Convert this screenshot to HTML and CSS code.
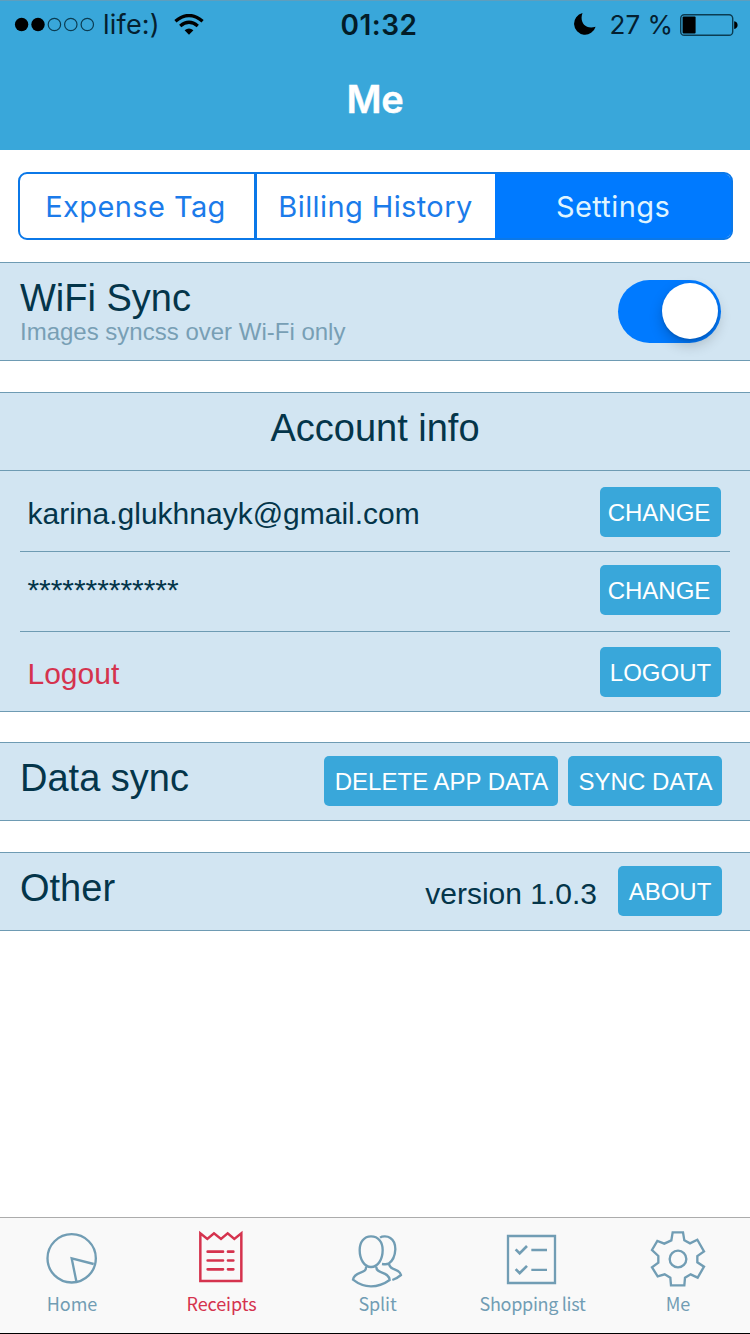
FILE: index.html
```html
<!DOCTYPE html>
<html lang="en">
<head>
<meta charset="utf-8">
<title>Me</title>
<link rel="stylesheet" href="styles.css">
</head>
<body>
<div class="app">
  <header class="header">
    <div class="status">
      <div class="status-left">
        <svg class="dots" width="84" height="16" viewBox="0 0 84 16">
          <circle cx="8.6" cy="7.5" r="6.7"/><circle cx="25" cy="7.5" r="6.7"/>
          <g fill="none" stroke="#0b3c52" stroke-width="1.2"><circle cx="41.4" cy="7.500" r="6.2"/><circle cx="57.800" cy="7.500" r="6.2"/><circle cx="74.300" cy="7.500" r="6.2"/></g>
        </svg>
        <span class="carrier">life:)</span>
        <svg class="wifi" width="30" height="22" viewBox="0 0 30 22">
          <path d="M10.6 16.200Q15 12.600 19.4 16.200L15 20.800Z"/>
          <g fill="none" stroke="#000" stroke-width="3.3"><path d="M1.400 7.200Q15-4.200 28.600 7.200"/><path d="M6.200 12Q15 4.500 23.800 12"/></g>
        </svg>
      </div>
      <span class="clock">01:32</span>
      <div class="status-right">
        <svg class="moon" width="22" height="22" viewBox="0 0 22 22"><path d="M8.500 0C5.200 8.500 11 17.200 21.600 13.800A11 11 0 1 1 8.500 0Z"/></svg>
        <span class="percent">27 %</span>
        <svg width="58" height="22" viewBox="0 0 58 22">
          <rect x=".7" y=".7" width="52" height="20.600" rx="3.600" fill="none" stroke="#0b3c52" stroke-width="1.400"/>
          <rect x="2.600" y="2.400" width="13" height="17.200" rx="1"/><path d="M54.200 7.200Q57.600 8 57.600 11T54.200 15Z"/>
        </svg>
      </div>
    </div>
    <h1 class="title">Me</h1>
  </header>

  <main class="content">
    <nav class="segments">
      <a class="segment seg-expense"><span>Expense Tag</span></a>
      <a class="segment seg-billing"><span>Billing History</span></a>
      <a class="segment seg-settings"><span>Settings</span></a>
    </nav>

    <section class="panel wifi-panel">
      <div>
        <h2 class="heading">WiFi Sync</h2>
        <p class="hint">Images syncss over Wi-Fi only</p>
      </div>
      <div class="switch"><div class="knob"></div></div>
    </section>

    <section class="panel account">
      <h2 class="heading account-title">Account info</h2>
      <div class="row row-mail"><span class="value">karina.glukhnayk@gmail.com</span><button class="button change">CHANGE</button></div>
      <div class="row row-pass"><span class="value masked">*************</span><button class="button change">CHANGE</button></div>
      <div class="row row-out"><span class="value logout">Logout</span><button class="button">LOGOUT</button></div>
    </section>

    <section class="panel bar">
      <h2 class="heading">Data sync</h2>
      <div class="actions"><button class="button delete">DELETE APP DATA</button><button class="button sync">SYNC DATA</button></div>
    </section>

    <section class="panel bar">
      <h2 class="heading">Other</h2>
      <div class="actions"><span class="version">version 1.0.3</span><button class="button about">ABOUT</button></div>
    </section>
  </main>

  <footer class="tabs">
    <a class="tab">
      <svg class="icon" viewBox="126 72 180 180"><circle cx="215" cy="163" r="72.500"/><path d="M281 180L215 163L229 232"/></svg>
      <span class="label">Home</span>
    </a>
    <a class="tab active">
      <svg class="icon" viewBox="576 72 180 180"><path stroke-width="7.500" d="M601 231V88L622 105L642 88L663 105L683 88L703 105L724 88V231Z"/><path stroke-width="8" stroke-linecap="round" d="M623 143H669M684 143H700M623 169.500H669M684 169.500H700M623 196H669M684 196H700"/></svg>
      <span class="label">Receipts</span>
    </a>
    <a class="tab">
      <svg class="icon" viewBox="144 72 180 180"><path d="M213 97C192 97 179 114 179 138C179 166 193 189 213 189C234 189 248 166 248 138C248 114 235 97 213 97Z"/><path d="M198 188C201 211 163 200 159 227C178 242 196 247 213 247C231 247 251 241 269 228C266 200 227 211 229 188"/><path d="M240 101C247 96 262 96 271 102C282 109 286 121 286 136C285 156 276 172 266 179C260 182 253 181 246 180M267 178C267 201 300 193 303 213C295 220 286 225 277 228"/></svg>
      <span class="label">Split</span>
    </a>
    <a class="tab">
      <svg class="icon" viewBox="159 72 180 180"><path d="M174 96H315V237H174ZM244 138H291M244 197.500H291"/><path stroke-width="8" d="M197 136L209 148L231 126M197 195.500L209 207.500L231 185.500"/></svg>
      <span class="label myriad">Shopping list</span>
    </a>
    <a class="tab">
      <svg class="icon" viewBox="144 72 180 180"><circle cx="234" cy="165" r="25"/><path d="M218 85H249L253 109L270 118L292 107L312 142L292 156V175L312 188L293 221L272 211L255 221L253 244H213L211 221L194 211L173 217L156 190L175 176V156L156 138L172 111L193 119L214 109Z"/></svg>
      <span class="label">Me</span>
    </a>
  </footer>
</div>
</body>
</html>
```
FILE: styles.css
```css
* { box-sizing: border-box; }
body { margin: 0; background: #fff; font-family: "Liberation Sans", Arial, sans-serif; color: #04354a; }
h1, h2, p { margin: 0; font-weight: 400; }
svg { display: block; flex: none; }
.app { width: 750px; height: 1334px; display: flex; flex-direction: column; overflow: hidden; }

.header { height: 150px; flex: none; background: #39a7da; border-top: 1px solid #5f9ebd; font-family: Inter, sans-serif; }
.status { height: 48px; display: grid; grid-template-columns: 1fr auto 1fr; align-items: center; padding: 0 12px 0 13px; color: #000; font-size: 27px; line-height: 48px; }
.status-left, .status-right { display: flex; align-items: center; }
.status-right { justify-content: flex-end; }
.carrier { margin: 0 14px 0 6px; color: #042030; letter-spacing: 0.2px; }
.clock { font-size: 28px; font-weight: 600; letter-spacing: 0.5px; color: #021c28; margin-left: 7px; }
.percent { margin: 0 7px 0 14px; font-size: 26px; color: #042030; }
.moon { position: relative; top: -1px; }
.title { margin-top: 27px; line-height: 46px; font-size: 38px; font-weight: 600; color: #fff; text-align: center; letter-spacing: -0.3px; -webkit-text-stroke: 0.4px #fff; }

.content { flex: 1; padding-top: 22px; }
.segments { height: 68px; margin: 0 17px 22px 18px; display: flex; border: 2px solid #0b78e8; border-radius: 9px; overflow: hidden; font: 400 29px/66px Inter, sans-serif; letter-spacing: 0.4px; color: #1b7bea; text-align: center; background: #fff; }
.seg-expense { width: 237px; padding-right: 3px; border-right: 3px solid #0b78e8; }
.seg-billing { width: 238px; padding-right: 1px; }
.seg-settings { flex: 1; background: #007aff; color: #dff4ff; box-shadow: 0 -2px 0 #007aff, 2px 0 0 #007aff, 0 2px 0 #007aff; }

.panel { background: #d2e5f2; border-top: 1px solid #6e9bb3; border-bottom: 1px solid #6e9bb3; }
.heading { font-size: 38px; line-height: 44px; }
.wifi-panel { height: 99px; display: flex; justify-content: space-between; padding: 13px 29px 0 20px; margin-bottom: 31px; }
.hint { margin-top: -2px; font-size: 24px; line-height: 28px; color: #789fb5; }
.switch { width: 103px; height: 63px; margin-top: 4px; padding: 3px; border-radius: 32px; background: #007aff; display: flex; justify-content: flex-end; }
.knob { width: 56px; height: 56px; border-radius: 50%; background: #fff; box-shadow: 0 6px 14px rgba(0, 0, 0, .2), 0 2px 3px rgba(0, 0, 0, .12); }

.account { height: 320px; margin-bottom: 30px; }
.account-title { height: 78px; padding-top: 13px; border-bottom: 1px solid #6e9bb3; text-align: center; }
.row { display: flex; justify-content: space-between; align-items: flex-start; margin: 0 20px; padding: 0 9px 0 7.5px; border-bottom: 1px solid #6e9bb3; }
.row-mail { height: 81px; padding-top: 16px; }
.row-pass { height: 80px; padding-top: 13px; }
.row-out { height: 79px; padding-top: 15px; border-bottom: 0; }
.value { font-size: 30px; line-height: 54px; }
.masked { line-height: 50px; letter-spacing: -0.05px; }
.logout { color: #d5334e; }
.button { width: 121px; height: 50px; flex: none; padding: 2px 0 0; border: 0; border-radius: 5px; background: #39a7da; color: #fff; font: 24px/48px "Liberation Sans", Arial, sans-serif; text-align: center; white-space: nowrap; }
.change { padding-right: 3px; }

.bar { height: 79px; display: flex; justify-content: space-between; padding: 13px 28px 0 20px; margin-bottom: 31px; }
.actions { display: flex; gap: 10px; }
.delete { width: 234px; padding-left: 1px; }
.sync { width: 154px; padding-left: 1px; }
.about { width: 104px; }
.version { font-size: 30px; line-height: 55px; margin-right: 11px; }

.tabs { height: 117px; flex: none; display: grid; grid-template-columns: 144px 155px 157px 153px 138px; background: #f9f9f9; border-top: 1px solid #acacac; border-bottom: 1px solid #000; }
.tab { display: flex; flex-direction: column; align-items: center; padding-top: 10px; color: #719db4; }
.icon { width: 60px; height: 60px; fill: none; stroke: currentColor; stroke-width: 7; }
.label { font: 18px/26px "Noto Sans CJK SC", sans-serif; letter-spacing: -0.1px; margin-top: 2px; white-space: nowrap; }
.myriad { letter-spacing: -0.3px; }
.active { color: #d5334e; }
```
